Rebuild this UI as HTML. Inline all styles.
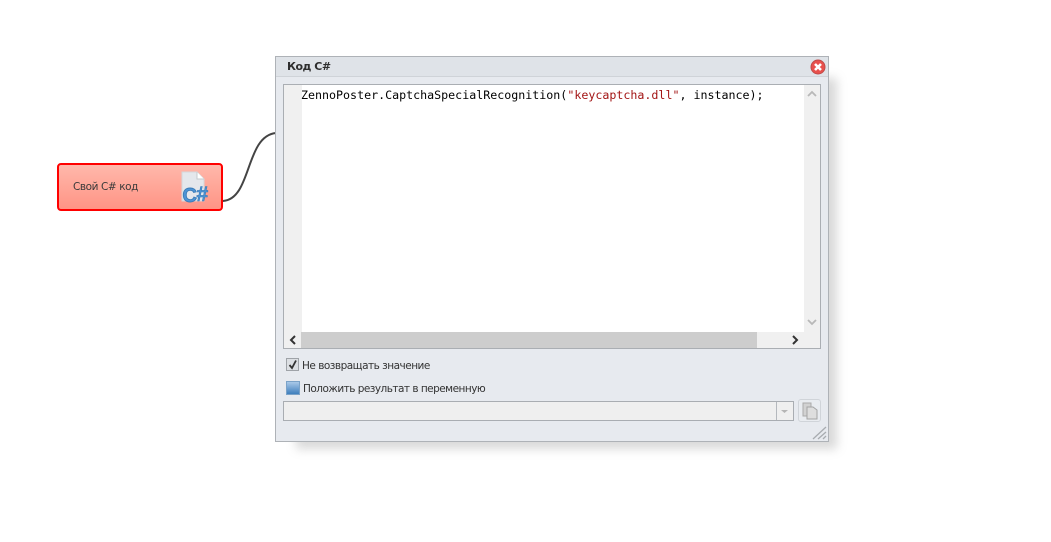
<!DOCTYPE html>
<html><head><meta charset="utf-8">
<style>
html,body{margin:0;padding:0;background:#fff;width:1051px;height:542px;overflow:hidden}
.a{position:absolute}
body{font-family:"DejaVu Sans","Liberation Sans",sans-serif;color:#333}
</style></head><body>
<svg class="a" style="left:0;top:0" width="1051" height="542">
<defs><filter id="b" x="-20%" y="-20%" width="140%" height="140%"><feGaussianBlur stdDeviation="5"/></filter></defs>
<rect x="296" y="78" width="541" height="371" fill="#aaa" opacity=".45" filter="url(#b)"/>
<path d="M223 201C252 199 245 136 276 133" fill="none" stroke="#444" stroke-width="2"/>
</svg>

<div class="a" style="left:57px;top:163px;width:162px;height:44px;border:2px solid #f00;border-radius:4px;background:linear-gradient(#ffb8ab,#ff9485)"></div>
<div class="a" style="left:73px;top:180px;font:10.5px/14px 'DejaVu Sans',sans-serif;letter-spacing:-.42px;color:#3a3a3a">Свой C# код</div>
<svg class="a" style="left:178px;top:168px" width="34" height="38">
<path d="M4 4H19L26 11V33H4Z" fill="#e4e7ec" stroke="#d4d7db"/>
<path d="M19 4V11H26" fill="#fff" stroke="#c4c8cd"/>
<text x="4.5" y="34" font-family="Liberation Sans" font-weight="bold" font-size="20" fill="#4d94d6" stroke="#3a7cb8" stroke-width=".9">C</text>
<text x="18.5" y="33" font-family="Liberation Sans" font-weight="bold" font-size="21" fill="#4d94d6" stroke="#3a7cb8" stroke-width=".6">#</text>
</svg>

<div class="a" style="left:275px;top:56px;width:552px;height:384px;border:1px solid #aeb2b7;background:#e7eaef"></div>
<div class="a" style="left:276px;top:57px;width:552px;height:19px;background:#dfe3e8;border-bottom:1px solid #cfd3d8"></div>
<div class="a" style="left:287px;top:59px;font:bold 11px/15px 'DejaVu Sans',sans-serif;letter-spacing:-.5px;color:#2f2f2f">Код C#</div>
<svg class="a" style="left:810px;top:59px" width="16" height="16">
<circle cx="8" cy="8" r="7" fill="#e8504c" stroke="#c04a48"/>
<path d="M5 5L11 11M11 5L5 11" stroke="#fff" stroke-width="2.6"/>
</svg>

<div class="a" style="left:283px;top:84px;width:536px;height:263px;border:1px solid #aaaeb3;background:#fff"></div>
<div class="a" style="left:284px;top:85px;width:18px;height:247px;background:#f0f0f0"></div>
<div class="a" style="left:804px;top:85px;width:16px;height:247px;background:#f0f0f0"></div>
<div class="a" style="left:284px;top:332px;width:536px;height:16px;background:#f0f0f0"></div>
<div class="a" style="left:301px;top:332px;width:456px;height:16px;background:#cdcdcd"></div>
<div class="a" style="left:301px;top:88px;font:11.65px/14px 'DejaVu Sans Mono',monospace;white-space:pre;color:#000">ZennoPoster.CaptchaSpecialRecognition(<span style="color:#a31515">"keycaptcha.dll"</span>, instance);</div>
<svg class="a" style="left:0;top:0" width="1051" height="542">
<path d="M808 96L812 92L816 96" fill="none" stroke="#b8b8b8" stroke-width="1.8"/>
<path d="M808 320L812 324L816 320" fill="none" stroke="#b8b8b8" stroke-width="1.8"/>
<path d="M295 336L291 340L295 344" fill="none" stroke="#333" stroke-width="2"/>
<path d="M793 336L797 340L793 344" fill="none" stroke="#333" stroke-width="2"/>
</svg>

<div class="a" style="left:286px;top:358px;width:11px;height:11px;border:1px solid #9fa3a8;background:#dcdfe3"></div>
<svg class="a" style="left:286px;top:358px" width="14" height="14"><path d="M3.5 7L6 10L10 2.5" fill="none" stroke="#333" stroke-width="1.8"/></svg>
<div class="a" style="left:302px;top:359px;font:10.5px/15px 'DejaVu Sans',sans-serif;letter-spacing:-.5px;color:#333;white-space:nowrap">Не возвращать значение</div>

<div class="a" style="left:286px;top:381px;width:12px;height:12px;border:1px solid #fff;background:linear-gradient(#a9c8e8,#3e7fbd);outline:1px solid #7aa2c8;outline-offset:-1px"></div>
<div class="a" style="left:303px;top:382px;font:10.5px/15px 'DejaVu Sans',sans-serif;letter-spacing:-.52px;color:#333;white-space:nowrap">Положить результат в переменную</div>

<div class="a" style="left:283px;top:401px;width:509px;height:18px;border:1px solid #a9adb2;background:#efefef"></div>
<div class="a" style="left:776px;top:402px;width:1px;height:18px;background:#b4b8bd"></div>
<svg class="a" style="left:777px;top:402px" width="16" height="18"><path d="M4 8H11L7.5 11Z" fill="#b5b5b5"/></svg>
<div class="a" style="left:798px;top:399px;width:21px;height:21px;border:1px solid #d0d4d9;border-radius:3px;background:#e9ecf0"></div>
<svg class="a" style="left:798px;top:399px" width="23" height="23">
<path d="M5 4H13V17H5Z" fill="#d2d2d2" stroke="#aaa"/>
<path d="M9 8H15L19 11V20H9Z" fill="#dedede" stroke="#a4a4a4"/>
</svg>
<svg class="a" style="left:810px;top:425px" width="18" height="16">
<path d="M3 14L16 2M8 14L16 7M13 14L16 11" stroke="#a8acb0" stroke-width="1.3" fill="none"/>
</svg>
</body></html>
